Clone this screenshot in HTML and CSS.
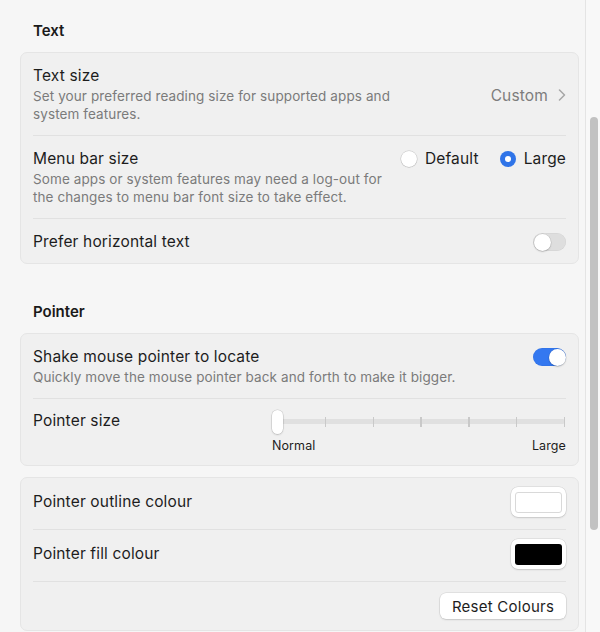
FILE: index.html
```html
<!DOCTYPE html>
<html lang="en">
<head>
<meta charset="utf-8">
<title>Display settings</title>
<link rel="stylesheet" href="styles.css">
</head>
<body>
<div class="window">
  <main class="content">
    <section class="section">
      <h2 class="section-title">Text</h2>
      <div class="card">
        <div class="row row-center">
          <div class="row-text">
            <div class="title">Text size</div>
            <div class="desc desc-narrow">Set your preferred reading size for supported apps and system features.</div>
          </div>
          <div class="value">Custom
            <svg class="chevron" width="8" height="12" viewBox="0 0 8 12"><path d="M1.5 1 L6.5 6 L1.5 11" fill="none" stroke="#a6a6a6" stroke-width="1.5" stroke-linecap="round" stroke-linejoin="round"/></svg>
          </div>
        </div>
        <div class="row">
          <div class="row-text">
            <div class="title">Menu bar size</div>
            <div class="desc desc-narrow">Some apps or system features may need a log-out for the changes to menu bar font size to take effect.</div>
          </div>
          <div class="radios">
            <label class="radio-item"><span class="radio"></span>Default</label>
            <label class="radio-item"><span class="radio radio-on"></span>Large</label>
          </div>
        </div>
        <div class="row row-center">
          <div class="title">Prefer horizontal text</div>
          <span class="toggle"><span class="knob"></span></span>
        </div>
      </div>
    </section>

    <section class="section">
      <h2 class="section-title">Pointer</h2>
      <div class="card">
        <div class="row">
          <div class="row-text">
            <div class="title">Shake mouse pointer to locate</div>
            <div class="desc">Quickly move the mouse pointer back and forth to make it bigger.</div>
          </div>
          <span class="toggle toggle-on"><span class="knob"></span></span>
        </div>
        <div class="row row-slider">
          <div class="title slider-title">Pointer size</div>
          <div class="slider">
            <div class="slider-track-area">
              <div class="track"></div>
              <div class="ticks">
                <span class="tick"></span><span class="tick"></span><span class="tick"></span><span class="tick"></span><span class="tick"></span><span class="tick"></span><span class="tick"></span>
              </div>
              <span class="thumb"></span>
            </div>
            <div class="slider-labels"><span>Normal</span><span>Large</span></div>
          </div>
        </div>
      </div>
      <div class="card card-gap">
        <div class="row row-colour">
          <div class="title">Pointer outline colour</div>
          <span class="well"><span class="swatch swatch-white"></span></span>
        </div>
        <div class="row row-colour">
          <div class="title">Pointer fill colour</div>
          <span class="well"><span class="swatch swatch-black"></span></span>
        </div>
        <div class="row row-button">
          <button class="button">Reset Colours</button>
        </div>
      </div>
    </section>
  </main>
  <div class="scrollbar"><div class="scroll-thumb"></div></div>
</div>
</body>
</html>
```

FILE: styles.css
```css
* { box-sizing: border-box; }

html, body {
  margin: 0;
  padding: 0;
  background: #f6f6f6;
}

body {
  font-family: Inter, "Noto Sans", "Liberation Sans", sans-serif;
  color: #1d1d1d;
  -webkit-font-smoothing: antialiased;
}

.window {
  display: flex;
  width: 600px;
  height: 632px;
  overflow: hidden;
}

.content {
  flex: 1;
  padding: 21px 6px 0 20px;
}

.section + .section {
  margin-top: 38px;
}

.section-title {
  margin: 0 0 13px;
  padding: 1px 13px 0;
  height: 18px;
  font-size: 15px;
  line-height: 18px;
  font-weight: 600;
  color: #1a1a1a;
}

.card {
  background: #f0f0f0;
  border: 1px solid #e5e5e5;
  border-radius: 7px;
}

.card-gap {
  margin-top: 11px;
}

.row {
  display: flex;
  justify-content: space-between;
  align-items: flex-start;
  margin: 0 12px;
  padding: 14px 0 12px;
}

.row + .row {
  border-top: 1px solid #e1e1e1;
}

.row-center {
  align-items: center;
}

.title {
  font-size: 15.5px;
  letter-spacing: 0.15px;
  line-height: 18px;
  color: #1d1d1d;
}

.desc {
  margin-top: 2px;
  font-size: 13.5px;
  letter-spacing: 0.1px;
  line-height: 18px;
  color: #7b7b7b;
}

.desc-narrow {
  max-width: 364px;
}

.value {
  display: flex;
  align-items: center;
  gap: 10px;
  font-size: 15.5px;
  letter-spacing: 0.15px;
  color: #7d7d7d;
}

.chevron {
  display: block;
}

.radios {
  display: flex;
  gap: 21px;
}

.radio-item {
  display: flex;
  align-items: center;
  gap: 8px;
  font-size: 15.5px;
  letter-spacing: 0.15px;
  line-height: 18px;
}

.radio {
  width: 16px;
  height: 16px;
  border-radius: 50%;
  background: #ffffff;
  box-shadow: 0 0 0 0.5px rgba(0, 0, 0, 0.18), 0 0.5px 1px rgba(0, 0, 0, 0.15);
}

.radio-on {
  background: #2f74e8;
  box-shadow: none;
  position: relative;
}

.radio-on::after {
  content: "";
  position: absolute;
  left: 5px;
  top: 5px;
  width: 6px;
  height: 6px;
  border-radius: 50%;
  background: #ffffff;
}

.toggle {
  position: relative;
  flex: none;
  width: 33px;
  height: 18px;
  border-radius: 9px;
  background: #dedede;
  box-shadow: inset 0 0 0 0.5px rgba(0, 0, 0, 0.06);
}

.knob {
  position: absolute;
  top: 0.5px;
  left: 0.5px;
  width: 17px;
  height: 17px;
  border-radius: 50%;
  background: #ffffff;
  box-shadow: 0 0 0 0.5px rgba(0, 0, 0, 0.12), 0 1px 1.5px rgba(0, 0, 0, 0.18);
}

.toggle-on {
  background: #3478f0;
}

.toggle-on .knob {
  left: 15.5px;
}

.row-slider {
  padding: 11px 0 12px;
}

.slider-title {
  margin-top: 2px;
}

.slider {
  width: 294px;
}

.slider-track-area {
  position: relative;
  height: 24px;
}

.track {
  position: absolute;
  left: 5px;
  right: 1px;
  top: 9px;
  height: 5px;
  border-radius: 3px;
  background: #e0e0e0;
}

.ticks {
  position: absolute;
  left: 5px;
  right: 1px;
  top: 7px;
  height: 10px;
  display: flex;
  justify-content: space-between;
}

.tick {
  width: 1.5px;
  height: 10px;
  background: #c9c9c9;
}

.thumb {
  position: absolute;
  left: 0;
  top: 0;
  width: 11px;
  height: 24px;
  border-radius: 6px;
  background: #ffffff;
  box-shadow: 0 0 0 0.5px rgba(0, 0, 0, 0.15), 0 1px 2px rgba(0, 0, 0, 0.15);
}

.slider-labels {
  display: flex;
  justify-content: space-between;
  margin-top: 4px;
  font-size: 12.5px;
  letter-spacing: 0.1px;
  line-height: 15px;
  color: #1d1d1d;
}

.row-colour {
  align-items: center;
  padding: 9px 0 12px;
}

.well {
  display: flex;
  align-items: center;
  justify-content: center;
  width: 55px;
  height: 30px;
  border-radius: 7px;
  background: #ffffff;
  box-shadow: 0 0 0 0.5px rgba(0, 0, 0, 0.12), 0 1px 2px rgba(0, 0, 0, 0.12);
}

.swatch {
  width: 47px;
  height: 21px;
  border-radius: 3px;
}

.swatch-white {
  background: #ffffff;
  border: 1px solid #d9d9d9;
}

.swatch-black {
  background: #000000;
}

.row-button {
  justify-content: flex-end;
  padding: 11px 0 11px;
}

.button {
  height: 26px;
  width: 126px;
  padding: 0;
  border: none;
  border-radius: 6px;
  background: #ffffff;
  font-family: inherit;
  font-size: 15px;
  letter-spacing: 0.25px;
  color: #1d1d1d;
  box-shadow: 0 0 0 0.5px rgba(0, 0, 0, 0.12), 0 1px 2px rgba(0, 0, 0, 0.12);
}

.scrollbar {
  flex: none;
  width: 15px;
  border-left: 1px solid #e4e4e4;
  background: #f8f8f8;
  padding: 117px 2px 0 4px;
}

.scroll-thumb {
  width: 8px;
  height: 413px;
  border-radius: 4px;
  background: #c2c2c2;
}
```
